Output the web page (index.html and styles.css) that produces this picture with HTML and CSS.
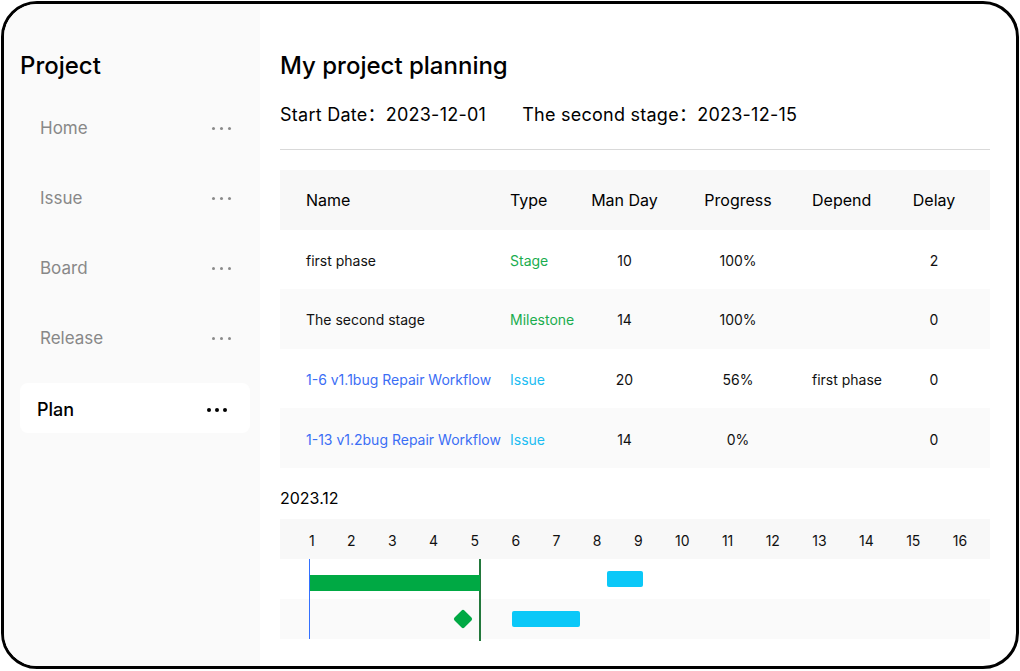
FILE: index.html
```html
<!DOCTYPE html>
<html lang="en">
<head>
<meta charset="utf-8">
<title>My project planning</title>
<link rel="stylesheet" href="styles.css">
</head>
<body>
<div class="frame">
  <aside class="sidebar">
    <h2 class="side-title">Project</h2>
    <nav class="nav">
      <div class="nav-item"><span>Home</span><span class="dots"><i></i><i></i><i></i></span></div>
      <div class="nav-item"><span>Issue</span><span class="dots"><i></i><i></i><i></i></span></div>
      <div class="nav-item"><span>Board</span><span class="dots"><i></i><i></i><i></i></span></div>
      <div class="nav-item"><span>Release</span><span class="dots"><i></i><i></i><i></i></span></div>
      <div class="nav-item active"><span>Plan</span><span class="dots"><i></i><i></i><i></i></span></div>
    </nav>
  </aside>
  <main class="main">
    <h1 class="title">My project planning</h1>
    <div class="dates">
      <span>Start Date：2023-12-01</span>
      <span>The second stage：2023-12-15</span>
    </div>
    <div class="sep"></div>
    <div class="table">
      <div class="row head">
        <div class="c name">Name</div>
        <div class="c type">Type</div>
        <div class="c mid">Man Day</div>
        <div class="c mid">Progress</div>
        <div class="c dep">Depend</div>
        <div class="c mid">Delay</div>
      </div>
      <div class="row body">
        <div class="c name">first phase</div>
        <div class="c type green">Stage</div>
        <div class="c mid">10</div>
        <div class="c mid">100%</div>
        <div class="c dep"></div>
        <div class="c mid">2</div>
      </div>
      <div class="row body alt">
        <div class="c name">The second stage</div>
        <div class="c type green">Milestone</div>
        <div class="c mid">14</div>
        <div class="c mid">100%</div>
        <div class="c dep"></div>
        <div class="c mid">0</div>
      </div>
      <div class="row body">
        <div class="c name blue">1-6 v1.1bug Repair Workflow</div>
        <div class="c type cyan">Issue</div>
        <div class="c mid">20</div>
        <div class="c mid">56%</div>
        <div class="c dep">first phase</div>
        <div class="c mid">0</div>
      </div>
      <div class="row body alt">
        <div class="c name blue">1-13 v1.2bug Repair Workflow</div>
        <div class="c type cyan">Issue</div>
        <div class="c mid">14</div>
        <div class="c mid">0%</div>
        <div class="c dep"></div>
        <div class="c mid">0</div>
      </div>
    </div>
    <div class="month">2023.12</div>
    <div class="gantt">
      <div class="g-head">
        <span>1</span><span>2</span><span>3</span><span>4</span><span>5</span><span>6</span><span>7</span><span>8</span><span>9</span><span>10</span><span>11</span><span>12</span><span>13</span><span>14</span><span>15</span><span>16</span>
      </div>
      <div class="g-row"></div>
      <div class="g-row alt"></div>
      <div class="g-line today"></div>
      <div class="g-line stage"></div>
      <div class="bar stage-bar"></div>
      <div class="bar issue-1"></div>
      <div class="bar issue-2"></div>
      <div class="milestone"></div>
    </div>
  </main>
</div>
</body>
</html>
```

FILE: styles.css
```css
* { box-sizing: border-box; }
html, body { margin: 0; padding: 0; background: #fff; }
body {
  font-family: Inter, "Liberation Sans", "Noto Sans CJK SC", sans-serif;
  color: #111;
}
.frame {
  margin: 1px;
  width: 1018px;
  height: 668px;
  border: 3px solid #000;
  border-radius: 36px;
  overflow: hidden;
  display: flex;
  background: #fff;
}
.sidebar {
  width: 256px;
  flex: none;
  background: #fafafa;
  padding: 46px 10px 0 16px;
}
.side-title, .title {
  margin: 0;
  font-size: 24px;
  line-height: 32px;
  font-weight: 500;
  color: #000;
}
.nav {
  margin-top: 21px;
  display: flex;
  flex-direction: column;
  gap: 20px;
}
.nav-item {
  height: 50px;
  display: flex;
  align-items: center;
  justify-content: space-between;
  padding: 0 19px 0 20px;
  font-size: 17px;
  color: #888;
  border-radius: 8px;
}
.dots { display: flex; gap: 5px; }
.dots i { width: 3px; height: 3px; border-radius: 50%; background: #8a8a8a; display: block; }
.nav-item.active {
  background: #fff;
  color: #000;
  font-size: 18px;
  font-weight: 500;
  padding: 3px 23px 0 17px;
}
.nav-item.active .dots { gap: 4px; }
.nav-item.active .dots i { width: 4px; height: 4px; background: #000; }

.main {
  flex: 1;
  padding: 46px 26px 0 20px;
}
.dates {
  margin-top: 21px;
  font-size: 18px;
  line-height: 24px;
  letter-spacing: 0.25px;
  display: flex;
  gap: 36px;
  color: #000;
}
.sep {
  margin-top: 22px;
  height: 1px;
  background: #d9d9d9;
}
.table { margin-top: 20px; }
.row {
  display: grid;
  grid-template-columns: 230px 75px 79px 148px 66px 112px;
  height: 59.6px;
  align-items: center;
  font-size: 14px;
  color: #111;
}
.row.body { padding-top: 2px; }
.row.head { background: #f8f8f8; font-size: 16px; color: #000; }
.row.alt { background: #fafafa; }
.c { white-space: nowrap; }
.c.name { padding-left: 26px; }
.c.mid { text-align: center; }
.green { color: #1aad4f; }
.blue { color: #3b6ef5; }
.cyan { color: #1cbdf2; }

.month {
  margin-top: 19px;
  font-size: 16px;
  line-height: 22px;
  color: #000;
}
.gantt {
  position: relative;
  margin-top: 10px;
}
.g-head {
  height: 40px;
  background: #f8f8f8;
  display: flex;
  align-items: center;
  gap: 32.4px;
  padding: 3px 0 0 29px;
  font-size: 14px;
  color: #111;
}
.g-row { height: 40px; }
.g-row.alt { background: #fafafa; }
.g-line { position: absolute; top: 40px; }
.g-line.today { left: 29px; width: 1px; height: 80px; background: #3370ff; }
.g-line.stage { left: 199px; width: 2px; height: 82px; background: #23783c; }
.bar { position: absolute; height: 16px; border-radius: 2px; }
.stage-bar { left: 30px; top: 56px; width: 170px; background: #00a944; border-radius: 0; }
.issue-1 { left: 327px; top: 52px; width: 36px; background: #0bc8f8; }
.issue-2 { left: 232px; top: 92px; width: 68px; background: #0bc8f8; }
.milestone {
  position: absolute;
  left: 176px;
  top: 93px;
  width: 14px;
  height: 14px;
  background: #00a944;
  border-radius: 2px;
  transform: rotate(45deg);
}
```
